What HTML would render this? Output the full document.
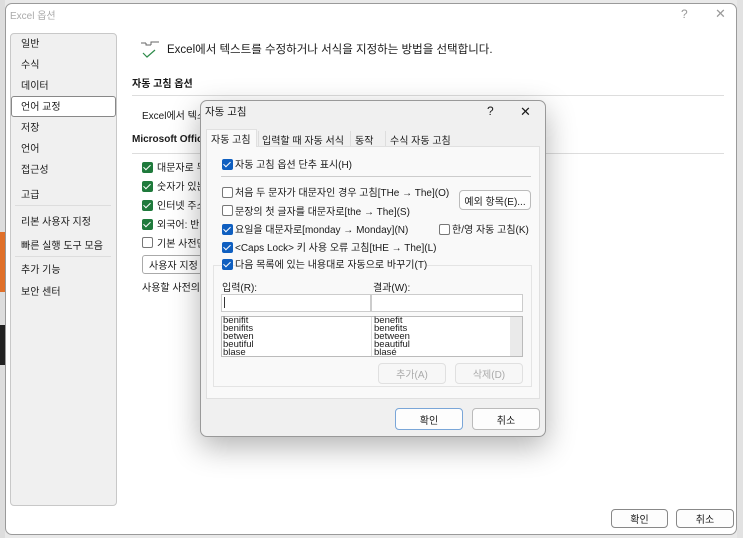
<!DOCTYPE html>
<html><head><meta charset="utf-8"><style>
*{box-sizing:border-box;margin:0;padding:0}
body{width:743px;height:538px;overflow:hidden;background:#e9e9e9;font-family:"Liberation Sans","Noto Sans CJK KR",sans-serif;font-size:10px;color:#1a1a1a;position:relative}
.a{position:absolute;white-space:nowrap}
.win{position:absolute;left:5px;top:3px;width:732px;height:532px;background:#fff;border:1px solid #9a9a9a;border-radius:7px}
.cb{position:absolute;width:11px;height:11px;border-radius:2px}
.on{background:#0f5fc0}
.on::after{content:"";position:absolute;left:3px;top:1px;width:3px;height:6px;border:solid #fff;border-width:0 1.3px 1.3px 0;transform:rotate(45deg)}
.gon{background:#1f7a3c;border-radius:2px}
.gon::after{content:"";position:absolute;left:3px;top:1px;width:3px;height:6px;border:solid #fff;border-width:0 1.3px 1.3px 0;transform:rotate(45deg)}
.off{border:1px solid #777;background:#fff}
.btn{position:absolute;border:1px solid #bbb;border-radius:4px;background:#fdfdfd;font-size:10px;display:flex;align-items:center;justify-content:center}
</style></head><body>
<div class="a" style="left:0;top:0;width:5px;height:538px;background:#ddd"></div>
<div class="a" style="left:0;top:232px;width:5px;height:60px;background:#e0702a"></div>
<div class="a" style="left:0;top:325px;width:5px;height:40px;background:#222"></div>
<div class="a" style="left:737px;top:0;width:6px;height:538px;background:#e2e2e2"></div>
<div class="win"></div>
<div class="a" style="left:10px;top:7px;color:#aaa">Excel 옵션</div>
<div class="a" style="left:681px;top:7px;color:#999;font-size:12px">?</div>
<div class="a" style="left:715px;top:6px;color:#999;font-size:13px">✕</div>
<div class="a" style="left:10px;top:33px;width:107px;height:473px;background:#f0f0f0;border:1px solid #c8c8c8;border-radius:4px"></div>
<div class="a" style="left:11px;top:96px;width:105px;height:21px;background:#fff;border:1px solid #888;border-radius:3px"></div>
<div class="a" style="left:21px;top:34px;line-height:21px;font-size:10px">일반<br>수식<br>데이터<br>언어 교정<br>저장<br>언어<br>접근성</div>
<div class="a" style="left:21px;top:186px;font-size:10px">고급</div>
<div class="a" style="left:15px;top:205px;width:96px;height:1px;background:#ddd"></div>
<div class="a" style="left:21px;top:211px;line-height:24px">리본 사용자 지정<br>빠른 실행 도구 모음</div>
<div class="a" style="left:15px;top:256px;width:96px;height:1px;background:#ddd"></div>
<div class="a" style="left:21px;top:260px;line-height:22px">추가 기능<br>보안 센터</div>
<svg class="a" style="left:140px;top:40px" width="22" height="20"><path d="M1 3h5M6 3v2h5M11 5V2h4M15 2h4" stroke="#666" fill="none"/><path d="M3 13l4 4 8-7" stroke="#2e8b4a" stroke-width="1.2" fill="none"/></svg>
<div class="a" style="left:167px;top:41px;font-size:11.5px">Excel에서 텍스트를 수정하거나 서식을 지정하는 방법을 선택합니다.</div>
<div class="a" style="left:132px;top:75px;font-weight:bold">자동 고침 옵션</div>
<div class="a" style="left:132px;top:95px;width:592px;height:1px;background:#ddd"></div>
<div class="a" style="left:142px;top:107px">Excel에서 텍스</div>
<div class="a" style="left:132px;top:134px;font-weight:bold">Microsoft Offic</div>
<div class="a" style="left:132px;top:153px;width:592px;height:1px;background:#ddd"></div>
<div class="cb gon" style="left:142px;top:162px"></div><div class="a" style="left:157px;top:159px">대문자로 무</div>
<div class="cb gon" style="left:142px;top:181px"></div><div class="a" style="left:157px;top:178px">숫자가 있는</div>
<div class="cb gon" style="left:142px;top:200px"></div><div class="a" style="left:157px;top:197px">인터넷 주소</div>
<div class="cb gon" style="left:142px;top:219px"></div><div class="a" style="left:157px;top:216px">외국어: 반</div>
<div class="cb off" style="left:142px;top:237px"></div><div class="a" style="left:157px;top:235px">기본 사전만</div>
<div class="a" style="left:142px;top:255px;width:70px;height:19px;border:1px solid #aaa;border-radius:3px"></div>
<div class="a" style="left:149px;top:257px">사용자 지정</div>
<div class="a" style="left:142px;top:279px">사용할 사전의</div>
<div class="btn" style="left:611px;top:509px;width:57px;height:19px;border-color:#888">확인</div>
<div class="btn" style="left:676px;top:509px;width:58px;height:19px;border-color:#888">취소</div>

<!-- dialog -->
<div class="a" style="left:200px;top:100px;width:346px;height:337px;background:#f0f0f0;border:1px solid #999;border-radius:7px;box-shadow:0 10px 30px rgba(0,0,0,.3)"></div>
<div class="a" style="left:205px;top:104px;font-size:10.5px">자동 고침</div>
<div class="a" style="left:487px;top:104px;font-size:12px">?</div>
<div class="a" style="left:520px;top:104px;font-size:13px">✕</div>
<div class="a" style="left:206px;top:146px;width:334px;height:253px;background:#f9f9f9;border:1px solid #e0e0e0"></div>
<div class="a" style="left:206px;top:129px;width:51px;height:18px;background:#f9f9f9;border:1px solid #e0e0e0;border-bottom:none"></div>
<div class="a" style="left:211px;top:131px">자동 고침</div>
<div class="a" style="left:262px;top:132px">입력할 때 자동 서식</div>
<div class="a" style="left:355px;top:132px">동작</div>
<div class="a" style="left:390px;top:132px">수식 자동 고침</div>
<div class="a" style="left:258px;top:131px;width:1px;height:15px;background:#ddd"></div>
<div class="a" style="left:350px;top:131px;width:1px;height:15px;background:#ddd"></div>
<div class="a" style="left:385px;top:131px;width:1px;height:15px;background:#ddd"></div>
<div class="cb on" style="left:222px;top:159px"></div><div class="a" style="left:235px;top:156px">자동 고침 옵션 단추 표시(H)</div>
<div class="a" style="left:221px;top:176px;width:310px;height:1px;background:#ccc"></div>
<div class="cb off" style="left:222px;top:187px"></div><div class="a" style="left:235px;top:184px">처음 두 문자가 대문자인 경우 고침[THe → The](O)</div>
<div class="btn" style="left:459px;top:190px;width:72px;height:20px">예외 항목(E)...</div>
<div class="cb off" style="left:222px;top:205px"></div><div class="a" style="left:235px;top:203px">문장의 첫 글자를 대문자로[the → The](S)</div>
<div class="cb on" style="left:222px;top:224px"></div><div class="a" style="left:235px;top:221px">요일을 대문자로[monday → Monday](N)</div>
<div class="cb off" style="left:439px;top:224px"></div><div class="a" style="left:452px;top:221px">한/영 자동 고침(K)</div>
<div class="cb on" style="left:222px;top:242px"></div><div class="a" style="left:235px;top:239px">&lt;Caps Lock&gt; 키 사용 오류 고침[tHE → The](L)</div>
<div class="a" style="left:213px;top:265px;width:319px;height:122px;border:1px solid #e4e4e4"></div>
<div class="cb on" style="left:222px;top:259px"></div><div class="a" style="left:235px;top:256px;background:#f9f9f9">다음 목록에 있는 내용대로 자동으로 바꾸기(T)</div>
<div class="a" style="left:222px;top:279px">입력(R):</div>
<div class="a" style="left:373px;top:279px">결과(W):</div>
<div class="a" style="left:221px;top:294px;width:150px;height:18px;background:#fff;border:1px solid #ccc"></div>
<div class="a" style="left:371px;top:294px;width:152px;height:18px;background:#fff;border:1px solid #ccc"></div>
<div class="a" style="left:224px;top:297px;width:1px;height:11px;background:#333"></div>
<div class="a" style="left:221px;top:316px;width:302px;height:41px;background:#fff;border:1px solid #bbb"></div>
<div class="a" style="left:510px;top:317px;width:12px;height:39px;background:#eaeaea"></div>
<div class="a" style="left:371px;top:317px;width:1px;height:39px;background:#ddd"></div>
<div class="a" style="left:223px;top:317px;line-height:8px;font-size:9.5px">benifit<br>benifits<br>betwen<br>beutiful<br>blase</div>
<div class="a" style="left:374px;top:317px;line-height:8px;font-size:9.5px">benefit<br>benefits<br>between<br>beautiful<br>blasé</div>
<div class="btn" style="left:378px;top:363px;width:68px;height:21px;color:#aaa;border-color:#e0e0e0;background:#f7f7f7">추가(A)</div>
<div class="btn" style="left:455px;top:363px;width:68px;height:21px;color:#aaa;border-color:#e0e0e0;background:#f7f7f7">삭제(D)</div>
<div class="btn" style="left:395px;top:408px;width:68px;height:22px;border-color:#7aa6d8">확인</div>
<div class="btn" style="left:472px;top:408px;width:68px;height:22px">취소</div>
</body></html>
